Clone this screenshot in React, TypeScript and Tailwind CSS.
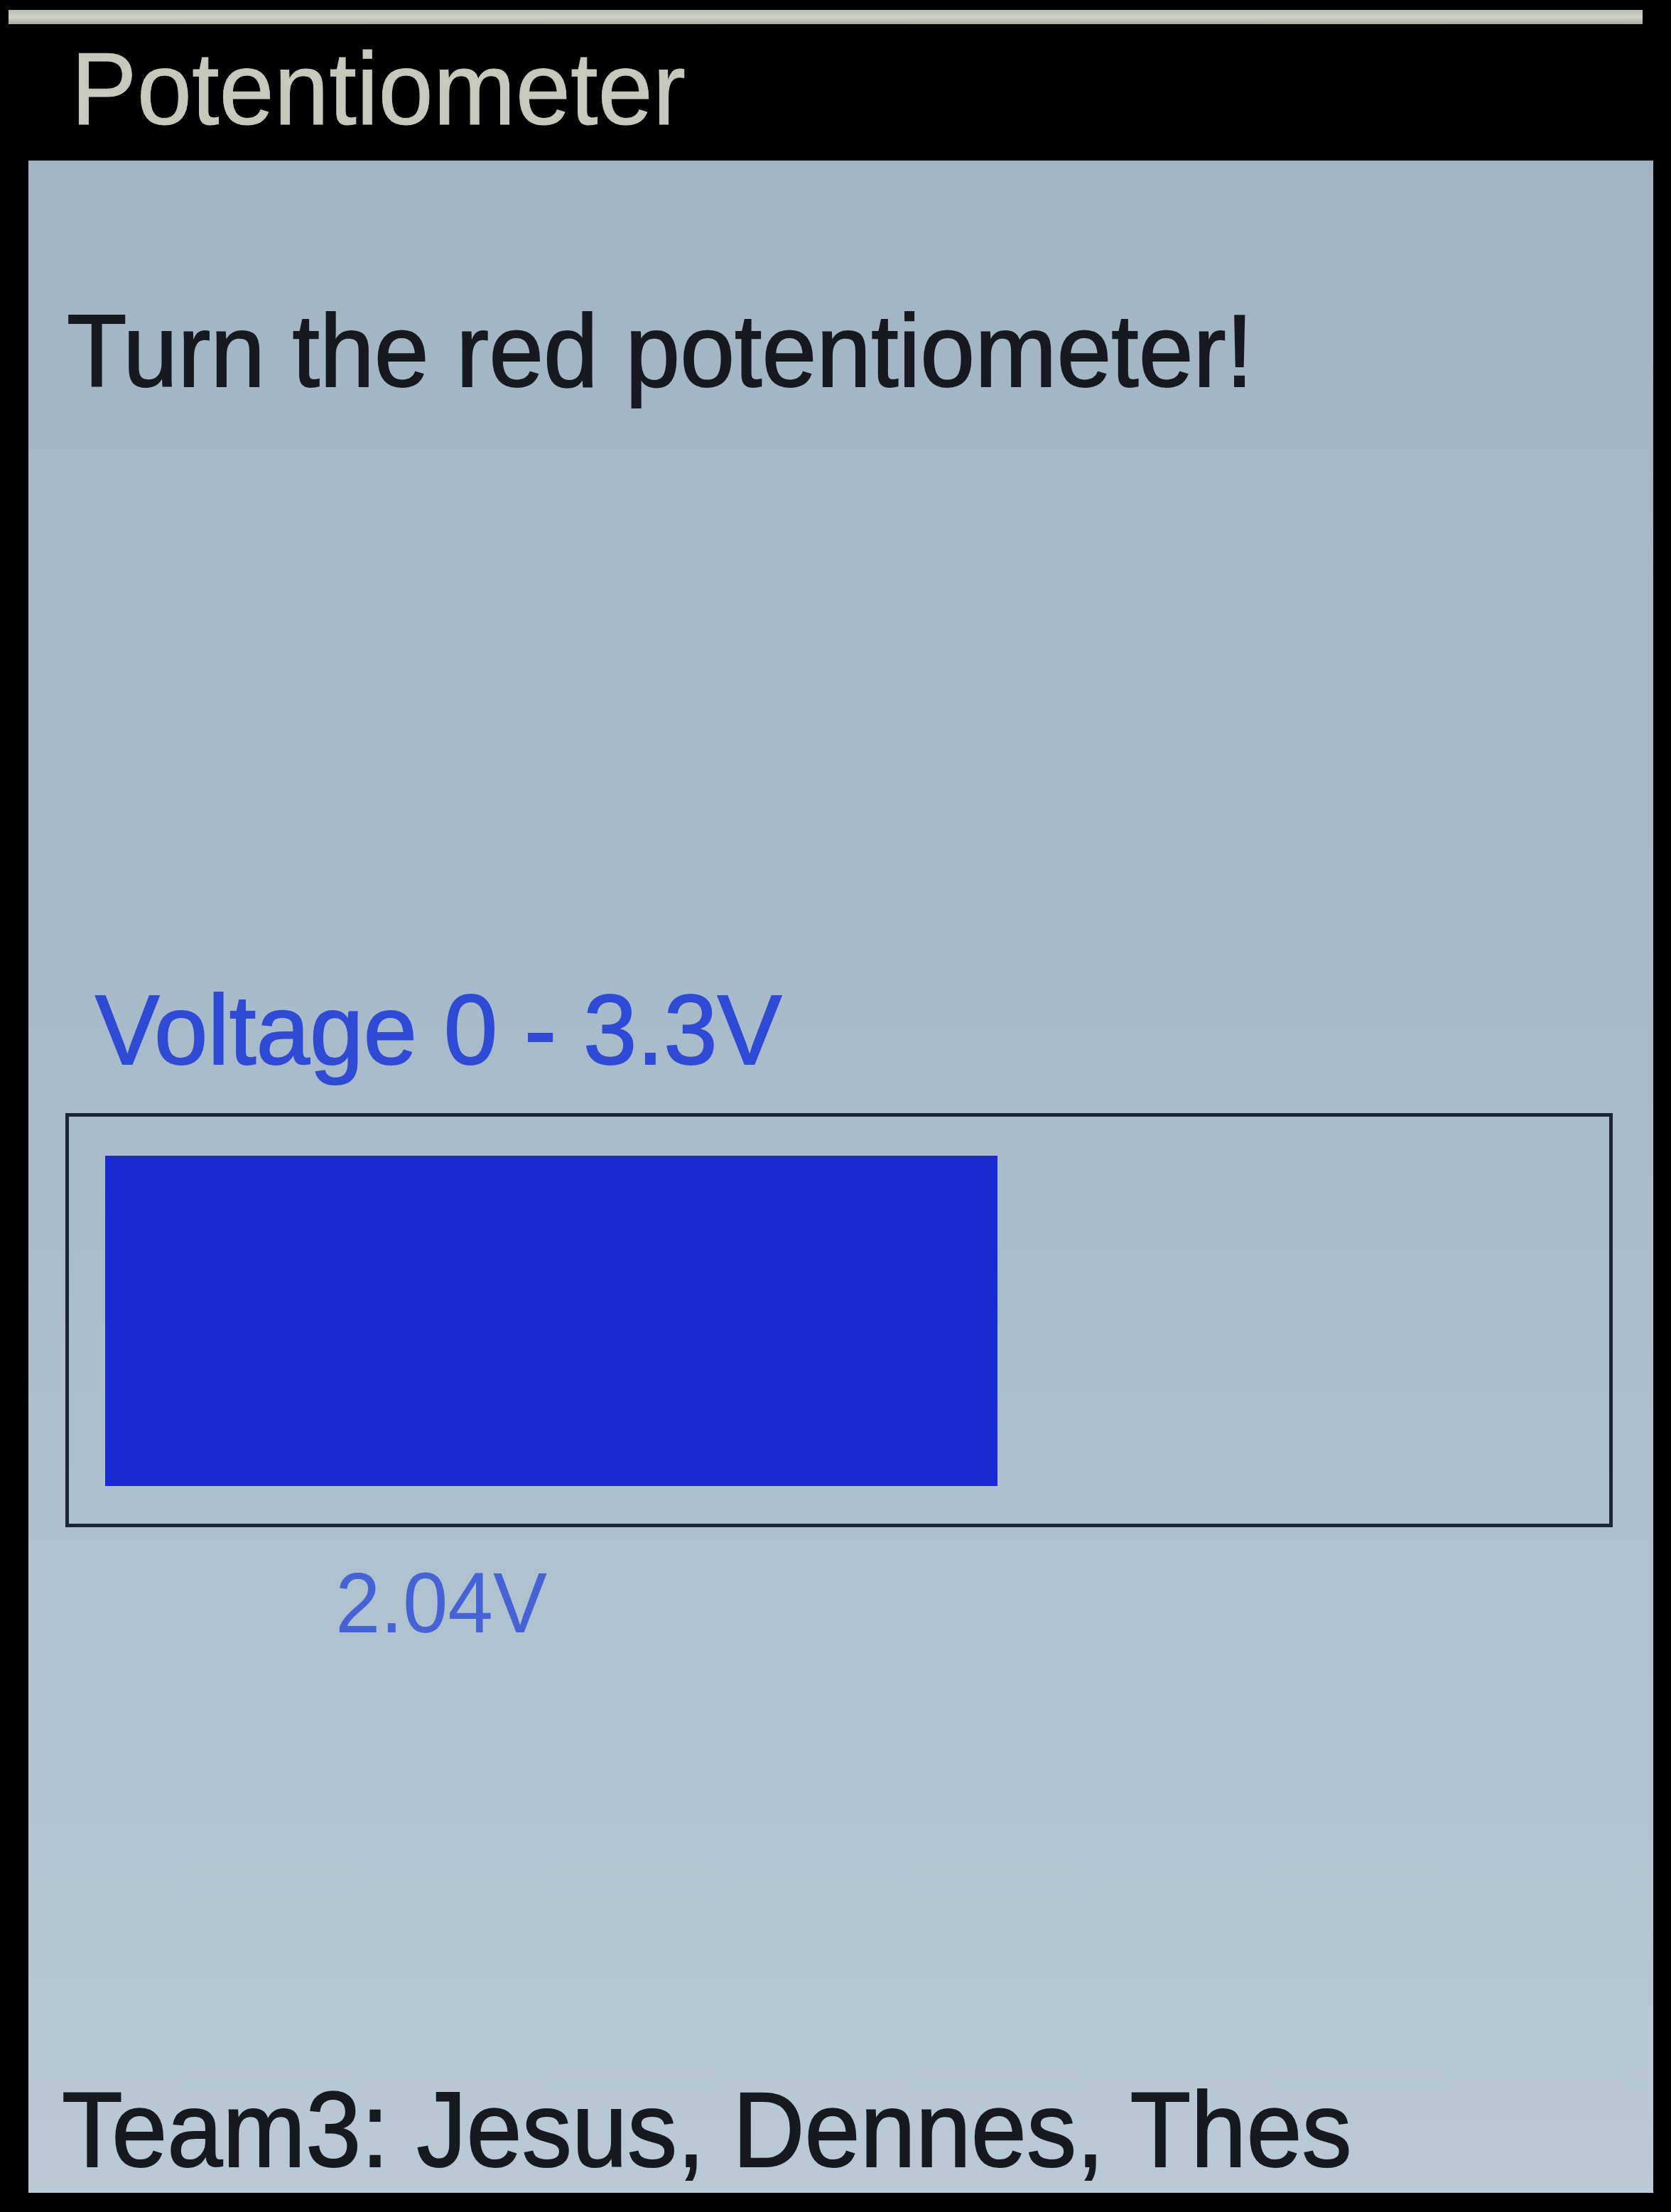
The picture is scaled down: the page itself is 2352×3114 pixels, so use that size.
import React from "react";

export default function App() {
  const font = { fontFamily: '"Liberation Sans", Arial, sans-serif' };
  return (
    <div className="w-[2352px] h-[3114px] bg-black overflow-hidden flex flex-col" style={font}>
      {/* top bezel highlight */}
      <div className="mt-[14px] ml-[12px] w-[2300px] h-[20px] bg-gradient-to-b from-[#b9bfb6] via-[#d0d4c8] to-[#a9ae9f]" />
      {/* title bar */}
      <div className="h-[192px] pt-[20px] pl-[100px] bg-black">
        <span className="inline-block origin-left scale-x-[0.965] text-[144px] leading-none text-[#c6cabd] [-webkit-text-stroke:1px_#c6cabd] whitespace-nowrap">
          Potentiometer
        </span>
      </div>
      {/* screen body */}
      <div className="ml-[40px] w-[2287px] h-[2861px] bg-gradient-to-b from-[#a1b5c4] via-[#a9bccb] to-[#b9cad6] flex flex-col pt-[197px]">
        <div className="pl-[54px]">
          <span className="inline-block origin-left scale-x-[0.96] text-[144px] leading-none text-[#161a20] [-webkit-text-stroke:2px_#161a20] whitespace-nowrap">
            Turn the red potentiometer!
          </span>
        </div>
        <div className="pl-[94px] mt-[813px]">
          <span className="inline-block origin-left scale-x-[0.97] text-[140px] leading-none text-[#2f4ad4] [-webkit-text-stroke:2px_#2f4ad4] whitespace-nowrap">
            Voltage 0 - 3.3V
          </span>
        </div>
        <div className="ml-[52px] mt-[47px] w-[2178px] h-[583px] border-[5px] border-[#1c2535] pl-[51px] pt-[55px]">
          <div className="bg-[#1a29d4] h-[465px]" style={{ width: `${Math.round((2.04 / 3.3) * 2032)}px` }} />
        </div>
        <div className="pl-[432px] mt-[46px]">
          <span className="inline-block origin-left scale-x-[0.95] text-[120px] leading-none text-[#4663d6] whitespace-nowrap">
            2.04V
          </span>
        </div>
        <div className="pl-[47px] mt-[607px]">
          <span className="inline-block origin-left scale-x-[0.936] text-[150px] leading-none text-[#161a20] [-webkit-text-stroke:2px_#161a20] whitespace-nowrap">
            Team3: Jesus, Dennes, Thes
          </span>
        </div>
      </div>
    </div>
  );
}
